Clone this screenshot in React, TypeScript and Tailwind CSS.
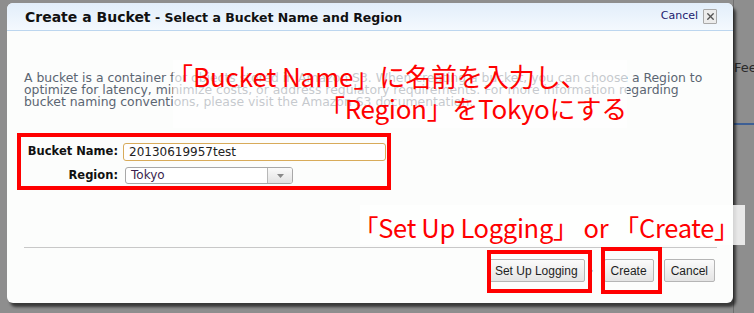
import { X } from "lucide-react";

const annot = "font-['Noto_Sans_CJK_JP','Noto_Sans',sans-serif] text-[#ff0000] leading-[32px] whitespace-nowrap";

function Annotations() {
  return (
    <>
      {/* faded label over the description */}
      <div className={`absolute left-[173px] top-[60px] h-[68px] w-[454px] bg-white/65 text-[26px] ${annot}`}>
        <div className="-ml-[6px] tracking-[-0.1px]">「Bucket Name」に名前を入力し、</div>
        <div className="pl-[146px] tracking-[-0.3px]">「Region」をTokyoにする</div>
      </div>
      <div className={`absolute left-[360px] top-[205px] h-[40px] w-[385px] bg-white/80 pt-[6px] text-[25.5px] ${annot}`}>
        <div className="-ml-[7px] tracking-[-0.3px]">「Set Up Logging」 or 「Create」</div>
      </div>
      <div className="absolute left-[17px] top-[133px] h-[57px] w-[374px] border-4 border-[#ff0000]" />
      <div className="absolute left-[487px] top-[250px] h-[43px] w-[105px] border-4 border-[#ff0000]" />
      <div className="absolute left-[601px] top-[247px] h-[47px] w-[61px] border-4 border-[#ff0000]" />
    </>
  );
}

function Button({ label }: { label: string }) {
  return (
    <button
      type="button"
      className="h-[23px] rounded-[2px] border border-[#b5b5b5] bg-gradient-to-b from-[#fbfbfb] to-[#e4e4e4] px-[6px] font-['Liberation_Sans',Arial,sans-serif] text-[12px] text-[#1e1e1e]"
    >
      {label}
    </button>
  );
}

export default function App() {
  return (
    <div className="relative h-[313px] w-[754px] overflow-hidden bg-[#8e8e8e] font-['DejaVu_Sans',Verdana,sans-serif]">
      {/* page behind the dialog */}
      <div className="flex h-full justify-end">
        <div className="w-[21px] border-l border-[#6f6f6f]">
          <div className="h-[125px] border-b-2 border-[#3d5f95] pt-[58px] text-[13px] text-[#2a2a2a]">Fee</div>
        </div>
      </div>

      {/* dialog */}
      <div className="absolute left-[7px] top-[3px] flex h-[300px] w-[726px] flex-col rounded-[6px] bg-[#fcfdfc] shadow-[3px_4px_3px_rgba(0,0,0,0.6)]">
        <div className="flex h-[28px] items-center justify-between rounded-t-[6px] border-b border-[#bcd6ef] bg-gradient-to-b from-[#e2eefa] to-[#f4f9fe] pl-[18px] pr-[16px]">
          <div className="whitespace-nowrap font-bold text-[#111]">
            <span className="text-[14px]">Create a Bucket</span>
            <span className="text-[12.5px]"> - Select a Bucket Name and Region</span>
          </div>
          <div className="flex items-center gap-[5px]">
            <span className="text-[11px] text-[#1b1b6e]">Cancel</span>
            <span className="flex h-[15px] w-[14px] items-center justify-center rounded-[1px] border border-[#a9a9a9] bg-[#ececec]">
              <X size={11} strokeWidth={3} className="text-[#555]" />
            </span>
          </div>
        </div>

        <div className="px-[17px] pt-[41px]">
          <p className="text-[12.4px] leading-[12px] text-[#5b6572]">
            A bucket is a container for objects stored in Amazon S3. When creating a bucket, you can choose a Region to optimize for latency, minimize costs, or address regulatory requirements. For more information regarding bucket naming conventions, please visit the Amazon S3 documentation.
          </p>

          <div className="mt-[35px] flex flex-col gap-[6px] text-[12px]">
            <div className="flex items-center">
              <label className="w-[94px] whitespace-nowrap text-right text-[11.5px] font-bold text-[#111]">Bucket Name:</label>
              <div className="ml-[5px] flex h-[18px] w-[263px] items-center rounded-[3px] border border-[#d8ab5a] bg-white px-[5px] text-[#222]">
                20130619957test
              </div>
            </div>
            <div className="flex items-center">
              <label className="w-[94px] whitespace-nowrap text-right text-[11.5px] font-bold text-[#111]">Region:</label>
              <div className="ml-[7px] flex h-[17px] w-[168px] overflow-hidden rounded-[3px] border border-[#a8a8a8] bg-white">
                <span className="flex-1 px-[5px] leading-[15px] text-[#3b1f4e]">Tokyo</span>
                <span className="flex w-[25px] items-center justify-center border-l border-[#b8b8b8] bg-gradient-to-b from-[#fafafa] to-[#e2e2e2]">
                  <svg width="7" height="4" viewBox="0 0 7 4">
                    <path d="M0 0h7L3.5 4z" fill="#888" />
                  </svg>
                </span>
              </div>
            </div>
          </div>
        </div>

        <div className="mt-auto mb-[11px] ml-[17px] mr-[16px] border-t border-[#c8c8c8]" />
        <div className="mb-[21px] flex items-center justify-end gap-[10px] pr-[18px]">
          <div className="flex items-center gap-[5px]">
            <Button label="Set Up Logging" />
            <span className="text-[10px] text-[#999]">›</span>
          </div>
          <Button label="Create" />
          <Button label="Cancel" />
        </div>
      </div>

      <Annotations />
    </div>
  );
}
